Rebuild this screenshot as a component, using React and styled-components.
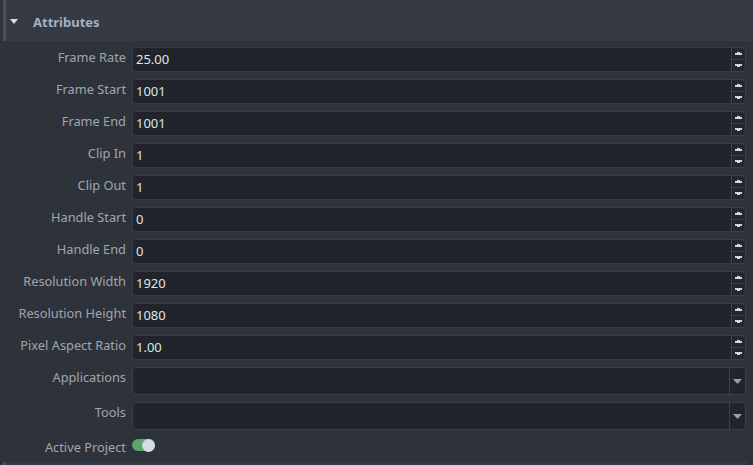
import React, { useState } from "react";
import styled, { createGlobalStyle } from "styled-components";

const GlobalStyle = createGlobalStyle`
  html, body {
    margin: 0;
    padding: 0;
    background: #2e323a;
  }
  body {
    font-family: "Noto Sans", "Open Sans", sans-serif;
    overflow: hidden;
  }
`;

const numberFields = [
  { label: "Frame Rate", value: "25.00" },
  { label: "Frame Start", value: "1001" },
  { label: "Frame End", value: "1001" },
  { label: "Clip In", value: "1" },
  { label: "Clip Out", value: "1" },
  { label: "Handle Start", value: "0" },
  { label: "Handle End", value: "0" },
  { label: "Resolution Width", value: "1920" },
  { label: "Resolution Height", value: "1080" },
  { label: "Pixel Aspect Ratio", value: "1.00" }
];

const SpinUp = () => (
  <svg width="7" height="3" viewBox="0 0 7 3">
    <rect x="2" y="0" width="3" height="1" fill="#d2d6dc" />
    <rect x="0" y="1" width="7" height="2" fill="#d2d6dc" />
  </svg>
);

const SpinDown = () => (
  <svg width="7" height="3" viewBox="0 0 7 3">
    <rect x="0" y="0" width="7" height="2" fill="#d2d6dc" />
    <rect x="2" y="2" width="3" height="1" fill="#d2d6dc" />
  </svg>
);

const Caret = () => (
  <svg width="9" height="5" viewBox="0 0 9 5">
    <path d="M0 0h9L4.5 5z" fill="#9aa0a8" />
  </svg>
);

export default function App() {
  const [active, setActive] = useState(true);
  const [open, setOpen] = useState(true);

  return (
    <>
      <GlobalStyle />
      <Wrapper>
        <Header onClick={() => setOpen(!open)}>
          <HeaderArrow>
            <svg width="8" height="5" viewBox="0 0 8 5">
              <path d="M0 0h8L4 5z" fill="#d6dae0" />
            </svg>
          </HeaderArrow>
          <Title>Attributes</Title>
        </Header>
        {open && (
          <Form>
            {numberFields.map((field) => (
              <React.Fragment key={field.label}>
                <Label>{field.label}</Label>
                <SpinBox>
                  <Field>{field.value}</Field>
                  <Spinner>
                    <SpinButton top>
                      <SpinUp />
                    </SpinButton>
                    <SpinButton>
                      <SpinDown />
                    </SpinButton>
                  </Spinner>
                </SpinBox>
              </React.Fragment>
            ))}
            <Label>Applications</Label>
            <Combo>
              <ComboField />
              <ComboButton>
                <Caret />
              </ComboButton>
            </Combo>
            <Label>Tools</Label>
            <Combo>
              <ComboField />
              <ComboButton>
                <Caret />
              </ComboButton>
            </Combo>
            <Label>Active Project</Label>
            <ToggleCell>
              <Toggle on={active} onClick={() => setActive(!active)}>
                <Knob on={active} />
              </Toggle>
            </ToggleCell>
          </Form>
        )}
        <NextHeader />
      </Wrapper>
    </>
  );
}

const Wrapper = styled.div`
  width: 753px;
  height: 465px;
  background: #2e323a;
  display: flex;
  flex-direction: column;
  overflow: hidden;
`;

const Header = styled.div`
  height: 41px;
  background: #353a44;
  display: flex;
  align-items: center;
  box-sizing: border-box;
  border-left: 3px solid #4a505b;
  margin-left: 3px;
  cursor: pointer;
`;

const HeaderArrow = styled.div`
  width: 8px;
  margin-left: 4px;
  margin-right: 15px;
  display: flex;
  align-items: center;
  padding-top: 1px;
`;

const Title = styled.span`
  color: #a2b0c4;
  font-weight: bold;
  font-size: 13px;
  padding-top: 2px;
`;

const Form = styled.div`
  display: grid;
  grid-template-columns: 126px 1fr;
  grid-template-rows: repeat(10, 25px) 28px 28px 20px;
  column-gap: 6px;
  row-gap: 7px;
  padding: 6px 7px 0 0;
`;

const Label = styled.div`
  color: #a1a6ae;
  font-size: 12.8px;
  line-height: 20px;
  text-align: right;
  white-space: nowrap;
`;

const SpinBox = styled.div`
  display: flex;
  height: 25px;
`;

const Field = styled.div`
  flex: 1;
  background: #21242b;
  border: 1px solid #363b44;
  border-right: none;
  border-radius: 4px 0 0 4px;
  color: #dfe4ea;
  font-size: 13px;
  display: flex;
  align-items: center;
  padding-left: 3px;
  padding-bottom: 1px;
  box-sizing: border-box;
`;

const Spinner = styled.div`
  width: 15px;
  display: flex;
  flex-direction: column;
`;

const SpinButton = styled.div`
  flex: 1;
  background: #23262d;
  border: 1px solid #3c414b;
  border-top: ${(p) => (p.top ? "1px solid #3c414b" : "none")};
  border-radius: ${(p) => (p.top ? "0 5px 0 0" : "0 0 5px 0")};
  display: flex;
  align-items: center;
  justify-content: center;
  box-sizing: border-box;
`;

const Combo = styled.div`
  display: flex;
  height: 28px;
  border: 1px solid #3a3f49;
  border-radius: 4px;
  background: #21242b;
  box-sizing: border-box;
  overflow: hidden;
`;

const ComboField = styled.div`
  flex: 1;
`;

const ComboButton = styled.div`
  width: 15px;
  border-left: 1px solid #3a3f49;
  display: flex;
  align-items: center;
  justify-content: center;
`;

const ToggleCell = styled.div`
  display: flex;
  align-items: center;
  padding-bottom: 4px;
`;

const Toggle = styled.div`
  width: 23px;
  height: 12px;
  border-radius: 6px;
  background: ${(p) => (p.on ? "#5aa66c" : "#4a4f59")};
  position: relative;
  cursor: pointer;
`;

const Knob = styled.div`
  position: absolute;
  top: -0.5px;
  left: ${(p) => (p.on ? "10px" : "0")};
  width: 13px;
  height: 13px;
  border-radius: 50%;
  background: #d6dbe1;
`;

const NextHeader = styled.div`
  margin-top: auto;
  height: 3px;
  background: #353a44;
  margin-left: 3px;
  margin-right: 6px;
  border-left: 3px solid #4a505b;
`;
